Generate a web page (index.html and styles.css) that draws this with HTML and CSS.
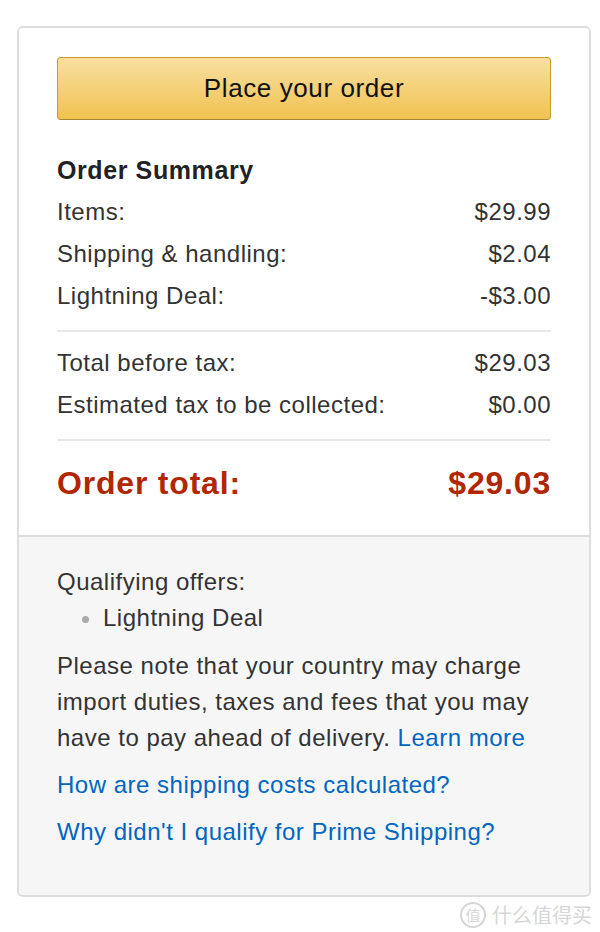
FILE: index.html
```html
<!DOCTYPE html>
<html lang="en">
<head>
  <meta charset="UTF-8">
  <title>Order Summary</title>
  <link rel="stylesheet" href="styles.css">
</head>
<body>
<div class="card">
  <div class="card-top">
    <button class="place-btn">Place your order</button>
    <h3 class="summary-title">Order Summary</h3>
    <div class="row"><span>Items:</span><span>$29.99</span></div>
    <div class="row"><span>Shipping &amp; handling:</span><span>$2.04</span></div>
    <div class="row"><span>Lightning Deal:</span><span>-$3.00</span></div>
    <div class="divider"></div>
    <div class="row"><span>Total before tax:</span><span>$29.03</span></div>
    <div class="row"><span>Estimated tax to be collected:</span><span>$0.00</span></div>
    <div class="divider"></div>
    <div class="row total"><span>Order total:</span><span>$29.03</span></div>
  </div>
  <div class="card-bottom">
    <div>Qualifying offers:</div>
    <ul class="offers">
      <li>Lightning Deal</li>
    </ul>
    <p class="note">Please note that your country may charge import duties, taxes and fees that you may have to pay ahead of delivery. <a href="#">Learn more</a></p>
    <a class="help-link" href="#">How are shipping costs calculated?</a>
    <a class="help-link" href="#">Why didn't I qualify for Prime Shipping?</a>
  </div>
</div>
<div class="watermark"><span class="wm-badge">值</span>什么值得买</div>
</body>
</html>
```

FILE: styles.css
```css
body {
  margin: 0;
  background: #fff;
  color: #333;
  font-family: 'Liberation Sans', Arial, sans-serif;
  font-size: 24px;
}
.card {
  width: 570px;
  margin: 26px 0 0 17px;
  border: 2px solid #ddd;
  border-radius: 6px;
  overflow: hidden;
}
.card-top {
  background: #fff;
  padding: 29px 38px 31px 38px;
}
.place-btn {
  display: block;
  width: 100%;
  height: 63px;
  border: 1px solid #c89b2d;
  border-bottom-color: #a88734;
  border-radius: 4px;
  background: linear-gradient(#f8dfa1, #f0c250);
  color: #111;
  font-family: inherit;
  font-size: 26px;
  letter-spacing: 0.6px;
  padding: 0;
}
.summary-title {
  margin: 29px 0 0 0;
  font-size: 25px;
  font-weight: bold;
  line-height: 42px;
  letter-spacing: 0.6px;
  color: #222;
}
.row {
  display: flex;
  justify-content: space-between;
  line-height: 42px;
  letter-spacing: 0.5px;
}
.divider {
  height: 2px;
  background: #e7e7e7;
  margin: 13px 0 10px 0;
}
.row.total {
  margin-top: 21px;
  font-size: 32px;
  font-weight: bold;
  color: #b12704;
  letter-spacing: 0.8px;
}
.card-bottom {
  background: #f6f6f6;
  border-top: 2px solid #ddd;
  padding: 27px 38px 34px 38px;
  line-height: 36px;
  letter-spacing: 0.5px;
}
.offers {
  margin: 0;
  padding-left: 46px;
}
.offers li::marker {
  color: #aaa;
}
.note {
  margin: 12px 0 11px 0;
}
a {
  color: #0066c0;
  text-decoration: none;
}
.help-link {
  display: block;
  margin-bottom: 11px;
}
.watermark {
  display: flex;
  align-items: center;
  justify-content: flex-end;
  gap: 6px;
  margin: 3px 8px 0 0;
  color: #d6d6d6;
  font-family: 'Noto Sans CJK SC', sans-serif;
  font-size: 20px;
  line-height: 30px;
}
.wm-badge {
  width: 22px;
  height: 22px;
  border: 2px solid #d6d6d6;
  border-radius: 50%;
  font-size: 15px;
  line-height: 22px;
  text-align: center;
}
```
